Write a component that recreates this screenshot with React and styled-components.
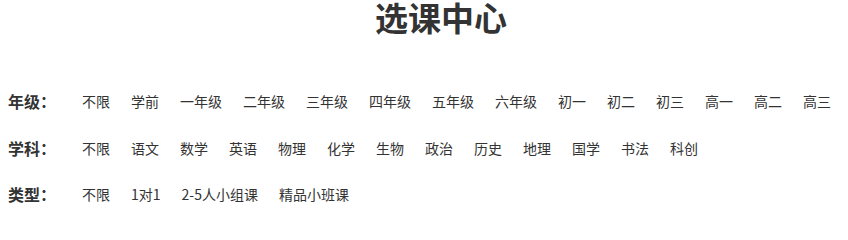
import React, { useState } from "react";
import styled, { createGlobalStyle } from "styled-components";

const filters = [
  {
    label: "年级：",
    options: [
      "不限",
      "学前",
      "一年级",
      "二年级",
      "三年级",
      "四年级",
      "五年级",
      "六年级",
      "初一",
      "初二",
      "初三",
      "高一",
      "高二",
      "高三",
    ],
  },
  {
    label: "学科：",
    options: [
      "不限",
      "语文",
      "数学",
      "英语",
      "物理",
      "化学",
      "生物",
      "政治",
      "历史",
      "地理",
      "国学",
      "书法",
      "科创",
    ],
  },
  {
    label: "类型：",
    options: ["不限", "1对1", "2-5人小组课", "精品小班课"],
  },
];

function App() {
  //states
  const [selected, setSelected] = useState({});

  return (
    <>
      <GlobalStyle />
      <MainContainer>
        <Title>选课中心</Title>
        <FilterList>
          {filters.map((group) => (
            <FilterRow key={group.label}>
              <Label>{group.label}</Label>
              <Options>
                {group.options.map((item) => (
                  <Option
                    key={item}
                    active={selected[group.label] === item}
                    onClick={() =>
                      setSelected({ ...selected, [group.label]: item })
                    }
                  >
                    {item}
                  </Option>
                ))}
              </Options>
            </FilterRow>
          ))}
        </FilterList>
      </MainContainer>
    </>
  );
}

export default App;

const GlobalStyle = createGlobalStyle`
  body {
    margin: 0;
    background: #fff;
    font-family: "Noto Sans CJK SC", "Noto Sans", sans-serif;
    color: #333;
  }
`;
const MainContainer = styled.div`
  padding: 0 8px;
`;
const Title = styled.h1`
  margin: 0;
  padding: 0 0 0 34px;
  font-size: 33px;
  line-height: 34px;
  font-weight: 700;
  text-align: center;
  color: #333;
`;
const FilterList = styled.div`
  margin-top: 44px;
`;
const FilterRow = styled.div`
  display: flex;
  align-items: center;
  height: 46.5px;
`;
const Label = styled.span`
  width: 74px;
  flex-shrink: 0;
  font-size: 16px;
  font-weight: 700;
  color: #333;
`;
const Options = styled.div`
  display: flex;
  gap: 21px;
`;
const Option = styled.span`
  font-size: 14px;
  cursor: pointer;
  white-space: nowrap;
  color: ${({ active }) => (active ? "#2c8df4" : "#333")};
`;
